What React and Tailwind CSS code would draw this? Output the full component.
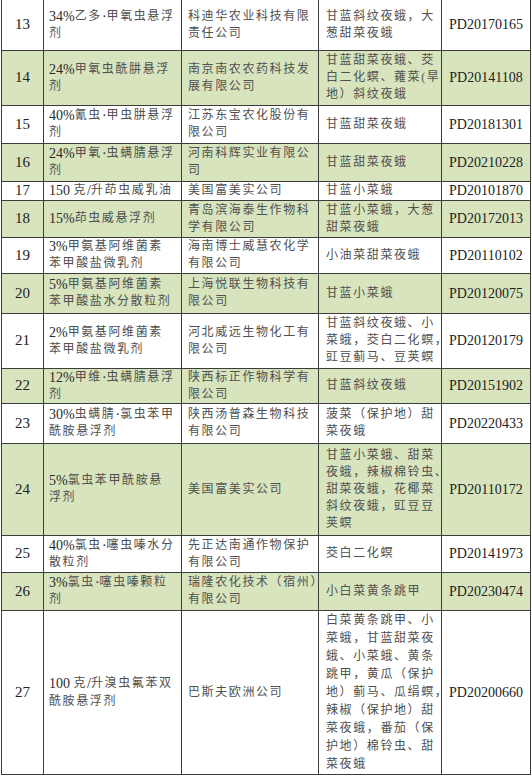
const ROWS = [
    { no: '13', h: 'h-[50px]', green: false, name: ['34%乙多·甲氧虫悬浮', '剂'], company: ['科迪华农业科技有限', '责任公司'], target: ['甘蓝斜纹夜蛾，大', '葱甜菜夜蛾'], code: 'PD20170165' },
    { no: '14', h: 'h-[55px]', green: true, name: ['24%甲氧虫酰肼悬浮', '剂'], company: ['南京南农农药科技发', '展有限公司'], target: ['甘蓝甜菜夜蛾、茭', '白二化螟、蕹菜(旱', '地）斜纹夜蛾'], code: 'PD20141108' },
    { no: '15', h: 'h-[38px]', green: false, name: ['40%氰虫·甲虫肼悬浮', '剂'], company: ['江苏东宝农化股份有', '限公司'], target: ['甘蓝甜菜夜蛾'], code: 'PD20181301' },
    { no: '16', h: 'h-[38px]', green: true, name: ['24%甲氧·虫螨腈悬浮', '剂'], company: ['河南科辉实业有限公', '司'], target: ['甘蓝甜菜夜蛾'], code: 'PD20210228' },
    { no: '17', h: 'h-[19px]', green: false, name: ['150 克/升茚虫威乳油'], company: ['美国富美实公司'], target: ['甘蓝小菜蛾'], code: 'PD20101870' },
    { no: '18', h: 'h-[37px]', green: true, name: ['15%茚虫威悬浮剂'], company: ['青岛滨海泰生作物科', '学有限公司'], target: ['甘蓝小菜蛾，大葱', '甜菜夜蛾'], code: 'PD20172013' },
    { no: '19', h: 'h-[36px]', green: false, name: ['3%甲氨基阿维菌素', '苯甲酸盐微乳剂'], company: ['海南博士威慧农化学', '有限公司'], target: ['小油菜甜菜夜蛾'], code: 'PD20110102' },
    { no: '20', h: 'h-[40px]', green: true, name: ['5%甲氨基阿维菌素', '苯甲酸盐水分散粒剂'], company: ['上海悦联生物科技有', '限公司'], target: ['甘蓝小菜蛾'], code: 'PD20120075' },
    { no: '21', h: 'h-[55px]', green: false, name: ['2%甲氨基阿维菌素', '苯甲酸盐微乳剂'], company: ['河北威远生物化工有', '限公司'], target: ['甘蓝斜纹夜蛾、小', '菜蛾，茭白二化螟，', '豇豆蓟马、豆荚螟'], code: 'PD20120179' },
    { no: '22', h: 'h-[35px]', green: true, name: ['12%甲维·虫螨腈悬浮', '剂'], company: ['陕西标正作物科学有', '限公司'], target: ['甘蓝斜纹夜蛾'], code: 'PD20151902' },
    { no: '23', h: 'h-[40px]', green: false, name: ['30%虫螨腈·氯虫苯甲', '酰胺悬浮剂'], company: ['陕西汤普森生物科技', '有限公司'], target: ['菠菜（保护地）甜', '菜夜蛾'], code: 'PD20220433' },
    { no: '24', h: 'h-[92px]', green: true, name: ['5%氯虫苯甲酰胺悬', '浮剂'], company: ['美国富美实公司'], target: ['甘蓝小菜蛾、甜菜', '夜蛾，辣椒棉铃虫、', '甜菜夜蛾，花椰菜', '斜纹夜蛾，豇豆豆', '荚螟'], code: 'PD20110172' },
    { no: '25', h: 'h-[37px]', green: false, name: ['40%氯虫·噻虫嗪水分', '散粒剂'], company: ['先正达南通作物保护', '有限公司'], target: ['茭白二化螟'], code: 'PD20141973' },
    { no: '26', h: 'h-[38px]', green: true, name: ['3%氯虫·噻虫嗪颗粒', '剂'], company: ['瑞隆农化技术（宿州）', '有限公司'], target: ['小白菜黄条跳甲'], code: 'PD20230474' },
    { no: '27', h: 'h-[164px]', green: false, name: ['100 克/升溴虫氟苯双', '酰胺悬浮剂'], company: ['巴斯夫欧洲公司'], target: ['白菜黄条跳甲、小', '菜蛾，甘蓝甜菜夜', '蛾、小菜蛾、黄条', '跳甲，黄瓜（保护', '地）蓟马、瓜绢螟，', '辣椒（保护地）甜', '菜夜蛾，番茄（保', '护地）棉铃虫、甜', '菜夜蛾'], code: 'PD20200660' }
];

// latin runs keep the normal width, cjk runs get the wide spacing
const LATIN = /([0-9A-Za-z%·./ ]+)/;
const IS_LATIN = /^[0-9A-Za-z%·./ ]+$/;

const Text = ({ line, leading }) => (
    <div className={`h-[17px] overflow-visible whitespace-nowrap text-[12px] ${leading}`}>
        {line.split(LATIN).filter(Boolean).map((part, i) =>
            IS_LATIN.test(part) ? (
                <span key={i} className="align-top text-[14px] tracking-normal text-[#2a2a2a]">{part}</span>
            ) : (
                <span key={i} className="align-top text-[12px] tracking-[1.6px]">{part}</span>
            )
        )}
    </div>
);

const Lines = ({ lines, leading }) =>
    lines.map((l, i) => <Text key={i} line={l} leading={leading} />);

export default function App() {
    return (
        <div className="w-[532px] h-[777px] bg-white overflow-hidden font-['Liberation_Serif','Noto_Sans_CJK_SC',serif] text-[#505050]">
            <table className="ml-px w-[529px] table-fixed border-collapse">
                <colgroup>
                    <col className="w-[42px]" />
                    <col className="w-[138px]" />
                    <col className="w-[137px]" />
                    <col className="w-[123px]" />
                    <col className="w-[89px]" />
                </colgroup>
                <tbody>
                    {ROWS.map((row, idx) => {
                        const edge = idx === 0 ? 'border-t-0' : '';
                        const leading = 'leading-[17px]';
                        const tall = row.no === '27' ? 'space-y-px' : '';
                        return (
                            <tr key={row.no} className={`${row.h} ${row.green ? 'bg-[#d7e4bd]' : 'bg-white'}`}>
                                <td className={`border border-[#3c3c3c] ${edge} p-0 align-middle text-center text-[15px] leading-[17px] text-[#222]`}>
                                    {row.no}
                                </td>
                                <td className={`border border-[#3c3c3c] ${edge} p-0 pl-[5px] align-middle`}>
                                    <div className={tall}><Lines lines={row.name} leading={leading} /></div>
                                </td>
                                <td className={`border border-[#3c3c3c] ${edge} p-0 pl-[6px] align-middle`}>
                                    <div className={tall}><Lines lines={row.company} leading={leading} /></div>
                                </td>
                                <td className={`border border-[#3c3c3c] ${edge} p-0 pl-[7px] align-middle`}>
                                    <div className={tall}><Lines lines={row.target} leading={leading} /></div>
                                </td>
                                <td className={`border border-[#3c3c3c] ${edge} p-0 align-middle text-center text-[14px] leading-[17px] text-[#222]`}>
                                    {row.code}
                                </td>
                            </tr>
                        );
                    })}
                </tbody>
            </table>
        </div>
    );
}
